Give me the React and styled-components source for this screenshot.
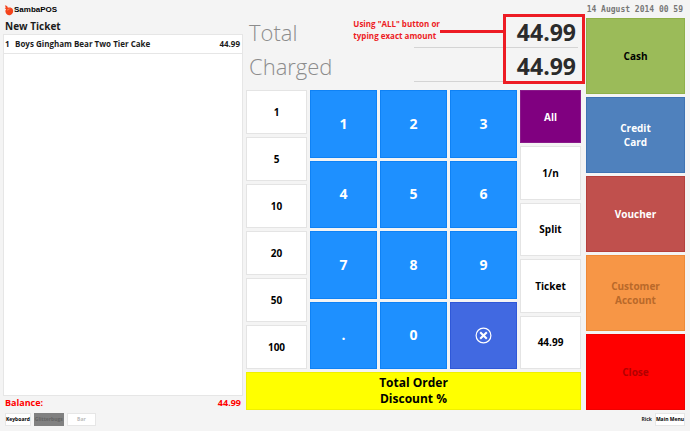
import React, { useState } from "react";
import styled, { createGlobalStyle } from "styled-components";

// ---------- Data ----------
const orders = [{ qty: 1, name: "Boys Gingham Bear Two Tier Cake", price: "44.99" }];

const quickAmounts = ["1", "5", "10", "20", "50", "100"];

const keys = ["1", "2", "3", "4", "5", "6", "7", "8", "9", ".", "0"];

const splitActions = ["All", "1/n", "Split", "Ticket", "44.99"];

const payments = [
  { label: "Cash", bg: "#9bbb59", edge: "#8fb04a", color: "#000" },
  { label: "Credit Card", bg: "#4f81bd", edge: "#3f73b3", color: "#fff" },
  { label: "Voucher", bg: "#c0504d", edge: "#b5403d", color: "#fff" },
  { label: "Customer Account", bg: "#f79646", edge: "#ee8937", color: "#b9692a", disabled: true },
  { label: "Close", bg: "#ff0000", edge: "#f00000", color: "#b30000", disabled: true },
];

// ---------- Styled Components ----------
const GlobalStyle = createGlobalStyle`
  * { box-sizing: border-box; }
  body {
    margin: 0;
    background: #f4f4f4;
    color: #1c1c1c;
    font-family: 'Open Sans', 'Noto Sans', sans-serif;
    font-weight: 700;
  }
  button { font: inherit; margin: 0; padding: 0; }
`;

const Page = styled.div`
  min-height: 100vh;
  display: flex; flex-direction: column;
  padding: 0 5px 0 3px;
`;

const Header = styled.header`
  display: flex; justify-content: space-between; align-items: center;
  height: 18px; padding: 0 2px 0 1px;
`;
const Brand = styled.div`
  display: flex; align-items: center;
  padding-top: 2px;
  font-family: 'Liberation Sans', Arial, sans-serif;
  font-size: 8px; line-height: 12px; color: #000;
`;
const Clock = styled.time`
  padding-top: 2px;
  font-family: 'DejaVu Sans Mono', 'Liberation Mono', monospace;
  font-size: 8px; line-height: 12px; color: #777;
`;

const Main = styled.main`
  flex: 1;
  display: grid; gap: 3px;
  grid-template-columns: 240fr 335fr 101fr;
`;

const TicketPanel = styled.section`
  display: flex; flex-direction: column;
  min-width: 0;
`;
const TicketTitle = styled.h1`
  margin: 0; padding-left: 2px;
  font-size: 10px; line-height: 16px; font-weight: 700;
`;
const OrderArea = styled.div`
  flex: 1;
  background: #fff; border: 1px solid #e6e6e6;
`;
const OrderTable = styled.table`
  width: 100%; border-collapse: collapse;
  font-size: 8px; line-height: 18px;
  border-bottom: 1px solid #e6e6e6;
`;
const OrderCell = styled.td`
  padding: 0 2px 0 1px;
  width: ${({ $wide }) => ($wide ? "auto" : "10px")};
  text-align: ${({ $right }) => ($right ? "right" : "left")};
`;
const Balance = styled.div`
  display: flex; justify-content: space-between;
  padding: 0 2px; font-size: 9px; line-height: 14px; color: #f00;
`;

const PayPanel = styled.section`
  display: flex; flex-direction: column;
  min-width: 0;
`;
const Display = styled.div`
  position: relative;
  display: flex; flex-direction: column; gap: 4px;
  padding: 0 3px 8px;
`;
const DisplayRow = styled.div`
  display: flex; justify-content: space-between;
  height: 30px; line-height: 29px;
`;
const DisplayLabel = styled.span`
  font-size: 22px; font-weight: 300; color: #8c8c8c;
`;
const DisplayValue = styled.output`
  width: 50%; padding-right: 2px;
  border-bottom: 1px solid #d4d4d4;
  font-size: 23px; color: #2b2b2b; text-align: right;
`;

// Callout that lies over the totals
const Note = styled.div`
  position: absolute; top: -4px; right: -4px;
  display: flex; align-items: flex-start;
  color: #ed1c24;
`;
const NoteText = styled.p`
  margin: 0; padding-top: 4px;
  font-size: 8px; line-height: 12px; white-space: nowrap;
`;
const NoteLine = styled.span`
  width: 63px; height: 3px; margin-top: 16px;
  background: #ed1c24;
`;
const NoteFrame = styled.span`
  width: 82px; height: 70px;
  border: 3px solid #ed1c24;
`;

const Pads = styled.div`
  flex: 1;
  display: grid; gap: 3px;
  grid-template-columns: 61fr 207fr 61fr;
`;
const PadColumn = styled.div`
  display: grid; gap: 3px;
  grid-auto-rows: 1fr;
`;
const Keypad = styled.div`
  display: grid; gap: 3px;
  grid-template-columns: repeat(3, 1fr);
  grid-auto-rows: 1fr;
`;
const PadButton = styled.button`
  background: ${({ $active }) => ($active ? "#800080" : "#fff")};
  color: ${({ $active }) => ($active ? "#fff" : "#000")};
  border: 1px solid ${({ $active }) => ($active ? "#8a1a8a" : "#e4e4e4")};
  font-size: 10px; line-height: 14px;
`;
const KeyButton = styled.button`
  display: flex; align-items: center; justify-content: center;
  background: ${({ $clear }) => ($clear ? "#4169e1" : "#1e90ff")};
  border: 1px solid ${({ $clear }) => ($clear ? "#2f58d8" : "#0f82f5")};
  color: #fff; font-size: 14px; line-height: 18px;
`;
const DiscountButton = styled.button`
  margin-top: 3px; padding: 2px 130px;
  background: #ff0; border: 1px solid #f0f000; color: #000;
  font-size: 12px; line-height: 16px;
`;

const Payments = styled.section`
  display: grid; gap: 3px;
  grid-auto-rows: 1fr;
  padding-left: 2px;
`;
const PaymentButton = styled.button`
  padding: 0 23px;
  background: ${({ $bg }) => $bg};
  border: 1px solid ${({ $edge }) => $edge};
  color: ${({ $color }) => $color};
  font-size: 10px; line-height: 14px;
`;

const Footer = styled.footer`
  display: flex; align-items: flex-start; gap: 3px;
  height: 21px; padding: 3px 0 0 2px;
`;
const FooterButton = styled.button`
  min-width: ${({ $wide }) => ($wide ? "29px" : "25px")}; height: 13px;
  background: ${({ $dark }) => ($dark ? "#808080" : "#fff")};
  border: 1px solid ${({ $dark }) => ($dark ? "#808080" : "#e6e6e6")};
  color: ${({ $dark, disabled }) => ($dark ? "#636363" : disabled ? "#bbb" : "#000")};
  font-size: 5px; line-height: 11px; white-space: nowrap;
`;
const UserName = styled.span`
  margin-left: auto;
  font-size: 5px; line-height: 13px;
`;

// ---------- Icons ----------
function Logo() {
  return (
    <svg width="10" height="11" viewBox="0 0 9 11" aria-hidden="true">
      <path d="M0.4 0.2 L2.6 1 L3.4 2.8 C5.2 2.1 7 2.3 8.1 4 C9.4 6.3 8.3 9 6 9.9 C3.7 10.7 1.4 9.3 1 7 C0.8 5.7 1 4.7 1.7 3.9 L0.2 3.6 L1.2 2.6 Z" fill="#f4431c" />
      <path d="M2.6 4.6 C3.6 3.4 5.2 3 6.4 3.8 C5.2 4 4 4.6 3.2 5.9 Z" fill="#ff7b4d" />
    </svg>
  );
}

function ClearIcon() {
  return (
    <svg width="17" height="17" viewBox="0 0 17 17" fill="none" stroke="#fff" aria-hidden="true">
      <circle cx="8.5" cy="8.5" r="7.4" strokeWidth="1.2" />
      <path d="M5.2 5.2 L11.8 11.8 M11.8 5.2 L5.2 11.8" strokeWidth="2.1" />
    </svg>
  );
}

// ---------- Main App ----------
export default function App() {
  const [charged, setCharged] = useState("44.99");
  const [typing, setTyping] = useState(false);

  function press(key) {
    setCharged((c) => (typing ? c + key : key));
    setTyping(true);
  }

  function setAmount(amount) {
    setCharged(amount);
    setTyping(false);
  }

  return (
    <>
      <GlobalStyle />
      <Page>
        <Header>
          <Brand>
            <Logo />
            SambaPOS
          </Brand>
          <Clock dateTime="2014-08-14T00:59">14 August 2014 00 59</Clock>
        </Header>

        <Main>
          <TicketPanel>
            <TicketTitle>New Ticket</TicketTitle>
            <OrderArea>
              <OrderTable>
                <tbody>
                  {orders.map((o) => (
                    <tr key={o.name}>
                      <OrderCell>{o.qty}</OrderCell>
                      <OrderCell $wide>{o.name}</OrderCell>
                      <OrderCell $right>{o.price}</OrderCell>
                    </tr>
                  ))}
                </tbody>
              </OrderTable>
            </OrderArea>
            <Balance>
              <span>Balance:</span>
              <span>44.99</span>
            </Balance>
          </TicketPanel>

          <PayPanel>
            <Display>
              <DisplayRow>
                <DisplayLabel>Total</DisplayLabel>
                <DisplayValue>44.99</DisplayValue>
              </DisplayRow>
              <DisplayRow>
                <DisplayLabel>Charged</DisplayLabel>
                <DisplayValue>{charged}</DisplayValue>
              </DisplayRow>
              <Note>
                <NoteText>
                  Using "ALL" button or
                  <br />
                  typing exact amount
                </NoteText>
                <NoteLine />
                <NoteFrame />
              </Note>
            </Display>

            <Pads>
              <PadColumn>
                {quickAmounts.map((a) => (
                  <PadButton key={a} onClick={() => setAmount(a)}>{a}</PadButton>
                ))}
              </PadColumn>
              <Keypad>
                {keys.map((k) => (
                  <KeyButton key={k} onClick={() => press(k)}>{k}</KeyButton>
                ))}
                <KeyButton $clear aria-label="Clear" onClick={() => setAmount("0.00")}>
                  <ClearIcon />
                </KeyButton>
              </Keypad>
              <PadColumn>
                {splitActions.map((a) => (
                  <PadButton key={a} $active={a === "All"} onClick={() => setAmount("44.99")}>{a}</PadButton>
                ))}
              </PadColumn>
            </Pads>
            <DiscountButton>Total Order Discount %</DiscountButton>
          </PayPanel>

          <Payments>
            {payments.map((p) => (
              <PaymentButton key={p.label} $bg={p.bg} $edge={p.edge} $color={p.color} disabled={p.disabled}>
                {p.label}
              </PaymentButton>
            ))}
          </Payments>
        </Main>

        <Footer>
          <FooterButton>Keyboard</FooterButton>
          <FooterButton $wide $dark>Glitterbugs</FooterButton>
          <FooterButton $wide disabled>Bar</FooterButton>
          <UserName>Rick</UserName>
          <FooterButton $wide>Main Menu</FooterButton>
        </Footer>
      </Page>
    </>
  );
}
